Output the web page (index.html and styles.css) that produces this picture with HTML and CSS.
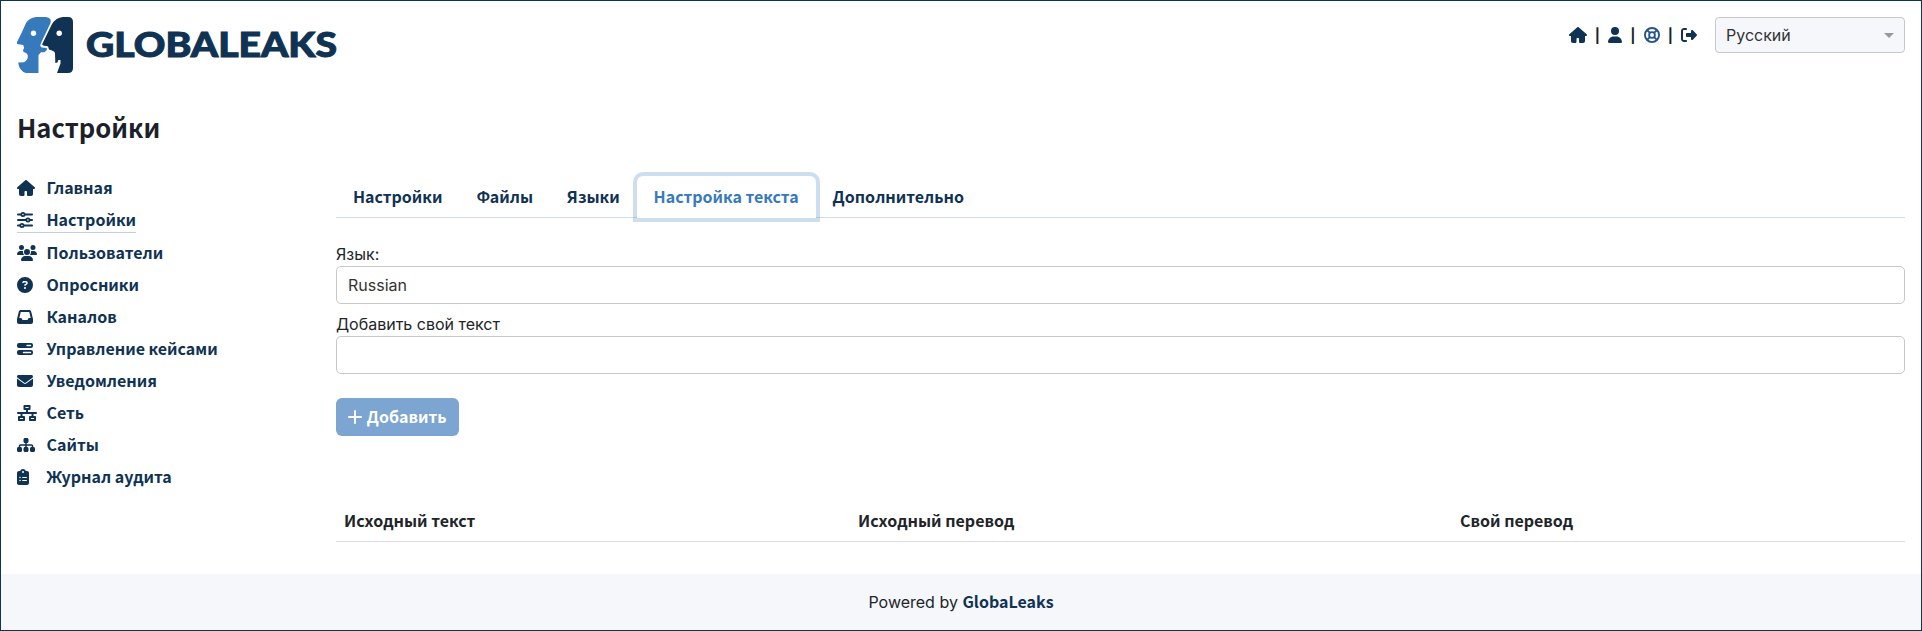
FILE: index.html
```html
<!DOCTYPE html>
<html lang="ru">
<head>
<meta charset="utf-8">
<title>GlobaLeaks</title>
<link rel="stylesheet" href="styles.css">
</head>
<body>
<div class="page">
  <header class="header">
    <div class="brand">
      <svg class="brand-mark" viewBox="0 0 56 56">
        <path fill="#377abc" d="M19 0H29Q35 1 33.500 6L23.800 26.500Q22.500 29.500 25 30.500L29.800 31V33L27.500 35.300H24L21.500 38V56H9Q2 54 1.200 45.500L7 45.300Q11.200 43 10.800 38.500Q10 35.500 6.500 35L6 33L7.200 31 6.300 28 0 27V25L5 15 9 6Q12 1 19 0Z"/>
        <path fill="#103253" d="M46 0H51Q56 0 56 5V51Q56 56 51 56H40L43.500 46.500V43H41.300L40.500 45.500 38.300 46 38 36Q37.500 34 35 33.500L32 32.500 31 29.300 26 28.500Q24.800 28 25.500 26.500L34.500 8Q38.500 0.500 46 0Z"/>
        <circle cx="16.500" cy="16.300" r="2.700" fill="#fff"/><circle cx="42.200" cy="16.300" r="2.700" fill="#fff"/>
      </svg>
      <svg class="brand-name" viewBox="0 0 254 34"><text class="brand-text" x="1" y="29" textLength="251" lengthAdjust="spacingAndGlyphs">GLOBALEAKS</text></svg>
    </div>
    <div class="tools">
      <svg class="icon home" viewBox="0 0 576 512"><use href="#i-home"/></svg><span class="sep">|</span>
      <svg class="icon user" viewBox="0 0 448 512"><path d="M224 256a128 128 0 1 0 0-256 128 128 0 1 0 0 256zm-45.700 48C79.800 304 0 383.800 0 482.300 0 498.700 13.300 512 29.700 512h388.600c16.400 0 29.700-13.300 29.700-29.700C448 383.800 368.200 304 269.700 304h-91.400z"/></svg><span class="sep">|</span>
      <svg class="icon ring" viewBox="0 0 512 512"><g fill="none" stroke="currentColor" stroke-width="60"><circle cx="256" cy="256" r="226"/><circle cx="256" cy="256" r="92"/><path d="M98 98l92 92M414 98l-92 92M98 414l92-92M414 414l-92-92"/></g></svg><span class="sep">|</span>
      <svg class="icon exit" viewBox="0 0 512 512"><path d="M377.900 105.900 500.700 228.700c7.200 7.200 11.300 17.100 11.300 27.300s-4.100 20.100-11.300 27.300L377.900 406.100c-6.400 6.400-15 9.900-24 9.900-18.700 0-33.900-15.200-33.900-33.900V320H192c-17.700 0-32-14.300-32-32v-64c0-17.700 14.300-32 32-32h128v-62.100c0-18.700 15.200-33.900 33.900-33.900 9 0 17.600 3.600 24 9.900zM160 96H96c-17.700 0-32 14.300-32 32v256c0 17.700 14.300 32 32 32h64c17.700 0 32 14.300 32 32s-14.300 32-32 32H96c-53 0-96-43-96-96V128c0-53 43-96 96-96h64c17.700 0 32 14.300 32 32s-14.300 32-32 32z"/></svg>
      <div class="lang"><span>Русский</span><i class="caret"></i></div>
    </div>
  </header>
  <h1 class="title">Настройки</h1>
  <div class="columns">
    <nav class="side">
      <a class="item"><span class="slot"><svg class="icon" viewBox="0 0 576 512"><path id="i-home" d="M575.800 255.500c0 18-15 32.100-32 32.100h-32l.7 160.200c.2 35.500-28.500 64.200-64 64.200H360c-22 0-40-18-40-40v-88c0-17.700-14.300-32-32-32h-16c-17.700 0-32 14.300-32 32v88c0 22-18 40-40 40h-72c-35.300 0-64-28.700-64-64V287.600H32c-18 0-32-14-32-32.100 0-9 3-17 10-24L266.400 8c7-7 15-8 22-8s15 2 21 7l255.400 224.500c8 7 12 15 11 24z"/></svg></span>Главная</a>
      <a class="item current"><span class="slot"><svg class="icon" viewBox="0 0 512 512"><path fill="none" stroke="currentColor" stroke-width="60" stroke-linecap="round" d="M30 80H130M250 80H482M30 256H290M410 256H482M30 432H98M218 432H482"/><g fill="none" stroke="currentColor" stroke-width="54"><circle cx="190" cy="80" r="53"/><circle cx="350" cy="256" r="53"/><circle cx="158" cy="432" r="53"/></g></svg></span>Настройки</a>
      <a class="item"><span class="slot"><svg class="icon" viewBox="0 0 640 512"><path d="M144 0a80 80 0 1 1 0 160 80 80 0 1 1 0-160zm368 0a80 80 0 1 1 0 160 80 80 0 1 1 0-160zM0 298.700C0 239.800 47.800 192 106.700 192h42.700c15.900 0 31 3.500 44.600 9.700-1.300 7.200-1.900 14.700-1.900 22.300 0 38.200 16.800 72.500 43.300 96H21.300C9.600 320 0 310.400 0 298.700zM405.300 320h-.7c26.600-23.500 43.300-57.800 43.300-96 0-7.600-.7-15-1.900-22.300 13.600-6.300 28.700-9.700 44.600-9.700h42.700c58.900 0 106.700 47.800 106.700 106.700 0 11.800-9.600 21.300-21.300 21.300H405.300zM224 224a96 96 0 1 1 192 0 96 96 0 1 1-192 0zM128 485.300C128 411.700 187.700 352 261.300 352h117.400C452.300 352 512 411.700 512 485.300c0 14.700-11.900 26.700-26.700 26.700H154.700c-14.700 0-26.700-11.900-26.700-26.700z"/></svg></span>Пользователи</a>
      <a class="item"><span class="slot"><svg class="icon" viewBox="0 0 512 512"><path d="M256 512A256 256 0 1 0 256 0a256 256 0 1 0 0 512zM169.800 165.300c7.900-22.300 29.100-37.300 52.800-37.300h58.300c34.900 0 63.100 28.300 63.100 63.100 0 22.600-12.100 43.500-31.700 54.800L280 264.400c-.2 13-10.900 23.600-24 23.600-13.300 0-24-10.700-24-24v-13.500c0-8.600 4.600-16.500 12.100-20.800l44.300-25.400c4.700-2.700 7.600-7.700 7.600-13.100 0-8.400-6.800-15.100-15.100-15.100h-58.300c-3.400 0-6.400 2.100-7.500 5.300l-.4 1.200c-4.400 12.500-18.200 19-30.600 14.600s-19-18.200-14.600-30.600l.3-1.300zM224 352a32 32 0 1 1 64 0 32 32 0 1 1-64 0z"/></svg></span>Опросники</a>
      <a class="item"><span class="slot"><svg class="icon" viewBox="0 0 512 512"><path d="M121 32C91.600 32 66 52 58.900 80.500L1.900 308.400C.6 313.500 0 318.700 0 323.900V416c0 35.300 28.700 64 64 64h384c35.300 0 64-28.700 64-64v-92.100c0-5.200-.6-10.400-1.900-15.500l-57-227.900C446 52 420.400 32 391 32H121zm0 64h270l48 192h-51.200c-12.100 0-23.200 6.800-28.600 17.700l-14.300 28.600c-5.400 10.800-16.500 17.700-28.600 17.700H195.800c-12.100 0-23.200-6.800-28.600-17.700l-14.300-28.600c-5.400-10.800-16.500-17.700-28.600-17.700H73L121 96z"/></svg></span>Каналов</a>
      <a class="item"><span class="slot"><svg class="icon" viewBox="0 0 512 512"><path fill-rule="evenodd" d="M64 64h384a64 64 0 0 1 64 64v32a64 64 0 0 1-64 64H64a64 64 0 0 1-64-64v-32a64 64 0 0 1 64-64zM320 120h112a24 24 0 0 1 0 48H320a24 24 0 0 1 0-48zM64 288h384a64 64 0 0 1 64 64v32a64 64 0 0 1-64 64H64a64 64 0 0 1-64-64v-32a64 64 0 0 1 64-64zM208 344h224a24 24 0 0 1 0 48H208a24 24 0 0 1 0-48z"/></svg></span>Управление кейсами</a>
      <a class="item"><span class="slot"><svg class="icon" viewBox="0 0 512 512"><path d="M48 64C21.500 64 0 85.500 0 112c0 15.100 7.100 29.300 19.200 38.400l217.600 163.200c11.400 8.500 27 8.500 38.400 0l217.600-163.200c12.100-9.100 19.200-23.300 19.200-38.400 0-26.500-21.500-48-48-48H48zM0 176v208c0 35.300 28.700 64 64 64h384c35.300 0 64-28.700 64-64V176L294.400 339.200c-22.800 17.100-54 17.100-76.800 0L0 176z"/></svg></span>Уведомления</a>
      <a class="item"><span class="slot"><svg class="icon" viewBox="0 0 640 512"><g fill="none" stroke="currentColor" stroke-width="62" stroke-linejoin="round"><path d="M238 30h164v100H238zM62 382h164v100H62zM414 382h164v100H414z"/><path stroke-linecap="round" d="M30 256H610M320 130v126M144 256v126M496 256v126"/></g></svg></span>Сеть</a>
      <a class="item"><span class="slot"><svg class="icon" viewBox="0 0 576 512"><path d="M208 80c0-26.500 21.500-48 48-48h64c26.500 0 48 21.500 48 48v64c0 26.500-21.500 48-48 48h-8v40h152c30.900 0 56 25.100 56 56v32h8c26.500 0 48 21.500 48 48v64c0 26.500-21.500 48-48 48h-64c-26.500 0-48-21.500-48-48v-64c0-26.500 21.500-48 48-48h8v-32c0-4.400-3.600-8-8-8H312v40h8c26.500 0 48 21.500 48 48v64c0 26.500-21.500 48-48 48h-64c-26.500 0-48-21.500-48-48v-64c0-26.500 21.500-48 48-48h8v-40H112c-4.400 0-8 3.600-8 8v32h8c26.500 0 48 21.500 48 48v64c0 26.500-21.500 48-48 48H48c-26.500 0-48-21.500-48-48v-64c0-26.500 21.500-48 48-48h8v-32c0-30.900 25.100-56 56-56h152v-40h-8c-26.500 0-48-21.500-48-48V80z"/></svg></span>Сайты</a>
      <a class="item"><span class="slot"><svg class="icon" viewBox="0 0 384 512"><path d="M192 0c-41.800 0-77.400 26.700-90.500 64H64C28.700 64 0 92.700 0 128v320c0 35.300 28.700 64 64 64h256c35.300 0 64-28.700 64-64V128c0-35.300-28.700-64-64-64h-37.500C269.400 26.700 233.800 0 192 0zm0 64a32 32 0 1 1 0 64 32 32 0 1 1 0-64zM72 272a24 24 0 1 1 48 0 24 24 0 1 1-48 0zm104-16h128c8.800 0 16 7.200 16 16s-7.200 16-16 16H176c-8.800 0-16-7.200-16-16s7.200-16 16-16zM72 368a24 24 0 1 1 48 0 24 24 0 1 1-48 0zm88 0c0-8.800 7.200-16 16-16h128c8.800 0 16 7.200 16 16s-7.200 16-16 16H176c-8.800 0-16-7.200-16-16z"/></svg></span>Журнал аудита</a>
    </nav>
    <main class="main">
      <div class="tabs">
        <a class="tab">Настройки</a><a class="tab">Файлы</a><a class="tab">Языки</a><a class="tab active">Настройка текста</a><a class="tab">Дополнительно</a>
      </div>
      <div class="label">Язык:</div>
      <div class="input">Russian</div>
      <div class="label second">Добавить свой текст</div>
      <div class="input"></div>
      <button class="add"><svg class="plus" viewBox="0 0 14 14"><path d="M7 1v12M1 7h12" fill="none" stroke="currentColor" stroke-width="2" stroke-linecap="round"/></svg><span>Добавить</span></button>
      <div class="thead"><span>Исходный текст</span><span>Исходный перевод</span><span>Свой перевод</span></div>
    </main>
  </div>
  <footer class="footer"><span>Powered by <b>GlobaLeaks</b></span></footer>
</div>
</body>
</html>
```
FILE: styles.css
```css
* { box-sizing: border-box; }
body { margin: 0; font: 16px/24px Inter, sans-serif; color: #212529; background: #fff; }
.page { height: 631px; border: 1px solid #103253; display: flex; flex-direction: column; }
.header { display: flex; justify-content: space-between; align-items: flex-start; padding: 16px 16px 0; height: 94px; }
.brand { display: flex; gap: 12px; }
.brand-mark { width: 56px; height: 56px; }
.brand-name { width: 254px; height: 34px; margin-top: 11px; overflow: visible; }
.brand-text { font: 900 34.5px Lato, sans-serif; fill: #103253; stroke: #103253; stroke-width: 1; }
.tools { display: flex; align-items: center; height: 36px; color: #103253; }
.icon { height: 16px; fill: currentColor; display: block; }
.home { width: 18px; }
.user { width: 14px; }
.ring { width: 16px; color: #27548a; }
.exit { width: 16px; }
.sep { width: 21.5px; padding-top: 2px; text-align: center; color: #1d1f2a; font: 700 14px/20px Inter, sans-serif; }
.lang { margin-left: 18px; width: 190px; height: 36px; border: 1px solid #c8c8c8; border-radius: 4px; background: #f5f7fb; color: #333; display: flex; align-items: center; justify-content: space-between; padding: 0 10px; }
.caret { border: 5px solid transparent; border-top-color: #999; border-bottom: 0; }
.title { margin: 12px 16px 2px; font: 700 25.6px/40px "Noto Sans CJK SC", "Noto Sans", sans-serif; color: #1d1f2a; }
.columns { display: flex; padding: 0 16px; flex: 1; }
.side { width: 319px; padding-top: 23px; display: flex; flex-direction: column; align-items: flex-start; }
.item, .tab, .add, .thead, .footer b { font-family: "Noto Sans CJK SC", "Noto Sans", sans-serif; font-weight: 700; }
.item { display: flex; align-items: center; height: 32px; padding-bottom: 2px; color: #103253; }
.current { height: 29px; padding-top: 4px; border-bottom: 1px solid #c3cee0; margin-bottom: 4px; }
.slot { width: 29.5px; padding-top: 2px; }
.main { flex: 1; padding-top: 27px; }
.tabs { display: flex; height: 42px; border-bottom: 1px solid #d5dde8; }
.tab { height: 42px; padding: 0 15.95px; border: 1px solid transparent; line-height: 38px; color: #103253; }
.active { color: #377abc; background: #fff; border-radius: 6px 6px 0 0; box-shadow: 0 0 0 4px rgba(55, 122, 188, .25); }
.label { margin-top: 24px; height: 24px; }
.second { margin-top: 8px; }
.input { height: 38px; border: 1px solid #c8c8c8; border-radius: 5px; padding: 6px 11px; color: #333; }
.add { display: flex; align-items: center; gap: 4.5px; margin-top: 24px; height: 38px; padding: 0 12.3px; border: 0; border-radius: 6px; background: #7ca5d2; color: #fff; font-size: 16px; line-height: 24px; }
.add span { padding-bottom: 2px; }
.plus { width: 14px; height: 14px; }
.thead { display: grid; grid-template-columns: 514px 602px 1fr; margin-top: 64px; height: 42px; padding: 8px 8px 0; border-bottom: 1px solid #dadce4; }
.footer { height: 56px; padding-bottom: 2px; background: #f5f7fb; display: flex; align-items: center; justify-content: center; }
.footer b { color: #103253; }
```
